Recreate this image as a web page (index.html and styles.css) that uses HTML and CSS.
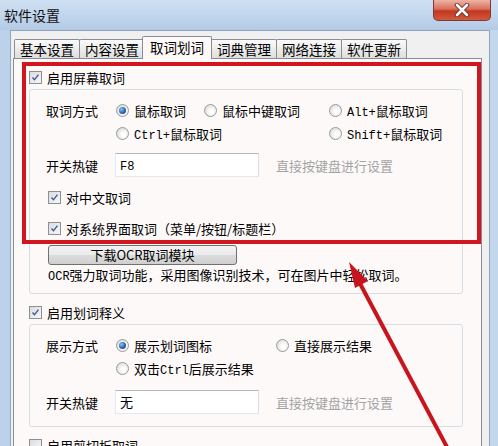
FILE: index.html
```html
<!DOCTYPE html>
<html lang="zh-CN">
<head>
    <meta charset="UTF-8">
    <title>软件设置</title>
    <link rel="stylesheet" href="styles.css">
</head>
<body>
    <div class="window">
        <div class="titlebar">
            <span class="title">软件设置</span>
            <div class="close-btn">
                <svg width="18" height="14" viewBox="0 0 18 14">
                    <path d="M4 2 L14 12 M14 2 L4 12" stroke="#6b3128" stroke-width="4.5" stroke-linecap="round"/>
                    <path d="M4 2 L14 12 M14 2 L4 12" stroke="#ffffff" stroke-width="2.6" stroke-linecap="round"/>
                </svg>
            </div>
        </div>
        <div class="client">
            <div class="tabs">
                <div class="tab">基本设置</div>
                <div class="tab">内容设置</div>
                <div class="tab active">取词划词</div>
                <div class="tab">词典管理</div>
                <div class="tab">网络连接</div>
                <div class="tab">软件更新</div>
            </div>
            <div class="page">
                <div class="check-row">
                    <span class="checkbox"><svg viewBox="0 0 13 13"><path d="M3 6.5 L5.3 9.2 L10 3" stroke="#3f5590" stroke-width="1.6" fill="none"/></svg></span>
                    <span>启用屏幕取词</span>
                </div>
                <div class="group group-grab">
                    <div class="field-row">
                        <span class="field-label">取词方式</span>
                        <div class="options grab-modes">
                            <span class="opt"><i class="radio on"></i><span>鼠标取词</span></span>
                            <span class="opt"><i class="radio"></i><span>鼠标中键取词</span></span>
                            <span class="opt"><i class="radio"></i><span><span class="en">Alt+</span>鼠标取词</span></span>
                            <span class="opt span2"><i class="radio"></i><span><span class="en">Ctrl+</span>鼠标取词</span></span>
                            <span class="opt"><i class="radio"></i><span><span class="en">Shift+</span>鼠标取词</span></span>
                        </div>
                    </div>
                    <div class="hotkey-row">
                        <span class="field-label">开关热键</span>
                        <div class="textbox"><span class="en">F8</span></div>
                        <span class="hint">直接按键盘进行设置</span>
                    </div>
                    <div class="check-row inner first">
                        <span class="checkbox"><svg viewBox="0 0 13 13"><path d="M3 6.5 L5.3 9.2 L10 3" stroke="#3f5590" stroke-width="1.6" fill="none"/></svg></span>
                        <span>对中文取词</span>
                    </div>
                    <div class="check-row inner second">
                        <span class="checkbox"><svg viewBox="0 0 13 13"><path d="M3 6.5 L5.3 9.2 L10 3" stroke="#3f5590" stroke-width="1.6" fill="none"/></svg></span>
                        <span>对系统界面取词（菜单/按钮/标题栏）</span>
                    </div>
                    <div class="btn">下载OCR取词模块</div>
                    <p class="note"><span class="en">OCR</span>强力取词功能，采用图像识别技术，可在图片中轻松取词。</p>
                </div>

                <div class="check-row section">
                    <span class="checkbox"><svg viewBox="0 0 13 13"><path d="M3 6.5 L5.3 9.2 L10 3" stroke="#3f5590" stroke-width="1.6" fill="none"/></svg></span>
                    <span>启用划词释义</span>
                </div>
                <div class="group group-show">
                    <div class="field-row">
                        <span class="field-label">展示方式</span>
                        <div class="options show-modes">
                            <span class="opt"><i class="radio on"></i><span>展示划词图标</span></span>
                            <span class="opt"><i class="radio"></i><span>直接展示结果</span></span>
                            <span class="opt"><i class="radio"></i><span>双击<span class="en">Ctrl</span>后展示结果</span></span>
                        </div>
                    </div>
                    <div class="hotkey-row">
                        <span class="field-label">开关热键</span>
                        <div class="textbox">无</div>
                        <span class="hint">直接按键盘进行设置</span>
                    </div>
                </div>

                <div class="check-row section">
                    <span class="checkbox"></span>
                    <span>启用剪切板取词</span>
                </div>
            </div>
        </div>

        <div class="highlight-box"></div>
        <svg class="arrow" width="498" height="446" viewBox="0 0 498 446">
            <line x1="356" y1="276" x2="456" y2="464" stroke="#c8141c" stroke-width="4"/>
            <polygon points="349,262 355,288 368,281" fill="#c8141c"/>
        </svg>
    </div>
</body>
</html>
```

FILE: styles.css
```css
body {
    margin: 0;
    font-family: "Noto Sans CJK SC", sans-serif;
    font-size: 13px;
    color: #000000;
}

.window {
    position: relative;
    width: 498px;
    height: 446px;
    overflow: hidden;
    display: flex;
    flex-direction: column;
    background: linear-gradient(90deg, #bcd2ea 0%, #cadcf0 50%, #c2d6ec 100%);
}

.titlebar {
    height: 30px;
    display: flex;
    justify-content: space-between;
    align-items: flex-start;
    padding-left: 4px;
    background: linear-gradient(#cfe0f2, #bfd4ec 60%, #b4cae4);
}

.title {
    font-size: 14px;
    line-height: 30px;
    color: #111111;
}

.close-btn {
    width: 56px;
    height: 20px;
    margin-right: 7px;
    border: 1px solid #7d3b32;
    border-top: none;
    border-radius: 0 0 5px 5px;
    background: linear-gradient(#eeb4a6 0%, #d9705a 45%, #c4361f 55%, #cf5a3c 100%);
    display: flex;
    justify-content: center;
    align-items: center;
}

.client {
    flex: 1;
    margin: 0 8px 0 10px;
    padding: 0 7px 0 2px;
    border: 1px solid #91a6bd;
    border-bottom: none;
    background: #f0f0f0;
    display: flex;
    flex-direction: column;
}

.tabs {
    height: 27px;
    display: flex;
    align-items: flex-end;
    padding-left: 1px;
    position: relative;
    z-index: 1;
}

.tab {
    height: 18px;
    padding: 0 5px;
    margin-right: -1px;
    border: 1px solid #898c95;
    border-bottom: none;
    border-radius: 2px 2px 0 0;
    background: linear-gradient(#fbfbfb, #ececec 50%, #dedede);
    font-size: 13.5px;
    line-height: 19px;
}

.tab.active {
    height: 22px;
    margin: 0 -1px -1px -2px;
    padding: 0 7px;
    background: #fdf9f9;
    line-height: 21px;
    position: relative;
}

.page {
    flex: 1;
    border: 1px solid #898c95;
    background: #fdf9f9;
    padding: 8px 18px 0 15px;
}

.check-row {
    height: 20px;
    display: flex;
    align-items: center;
    gap: 5px;
}

.check-row.section {
    margin-top: 8px;
}

.checkbox {
    width: 11px;
    height: 11px;
    border: 1px solid #8e8f8f;
    background: linear-gradient(135deg, #d9dce0, #f7f7f7);
    display: flex;
}

.checkbox svg {
    width: 11px;
    height: 11px;
}

.group {
    margin-top: 2px;
    border: 1px solid #d5dfe5;
    border-radius: 3px;
    padding: 9px 0 8px 16px;
}

.group-show {
    padding-bottom: 12px;
}

.field-row {
    display: flex;
}

.field-label {
    width: 70px;
    flex-shrink: 0;
    line-height: 23px;
}

.options {
    display: grid;
    grid-auto-rows: 23px;
}

.grab-modes {
    grid-template-columns: 88px 125px auto;
}

.grab-modes .span2 {
    grid-column: span 2;
}

.show-modes {
    grid-template-columns: 160px auto;
}

.opt {
    display: flex;
    align-items: center;
    gap: 5px;
    white-space: nowrap;
}

.radio {
    width: 11px;
    height: 11px;
    border: 1px solid #9a9a9a;
    border-radius: 50%;
    background: radial-gradient(circle at 60% 60%, #ffffff 20%, #d6d6d6 90%);
    position: relative;
}

.radio.on::after {
    content: "";
    position: absolute;
    left: 2px;
    top: 2px;
    width: 7px;
    height: 7px;
    border-radius: 50%;
    background: radial-gradient(circle at 35% 35%, #8fc2f0 0%, #2a66b0 55%, #163f7a 100%);
}

.en {
    font-family: "Liberation Mono", monospace;
    font-size: 12px;
}

.hotkey-row {
    display: flex;
    align-items: center;
    margin-top: 8px;
}

.group-show .hotkey-row {
    margin-top: 10px;
}

.field-label + .textbox {
    margin-left: -1px;
}

.textbox {
    width: 138px;
    height: 22px;
    padding-left: 4px;
    border: 1px solid #e3e9ef;
    border-top-color: #b5b8bf;
    border-right-color: #dbdfe6;
    background: #ffffff;
    line-height: 22px;
    margin-right: 17px;
}

.hint {
    color: #a3a3a3;
}

.check-row.inner {
    margin-left: 2px;
}

.check-row.first {
    margin-top: 10px;
}

.check-row.second {
    margin-top: 11px;
}

.btn {
    width: 187px;
    height: 18px;
    margin: 7px 0 0 2px;
    border: 1px solid #707070;
    border-radius: 3px;
    background: linear-gradient(#f2f2f2 0%, #ebebeb 50%, #dddddd 51%, #cfcfcf 100%);
    text-align: center;
    line-height: 18px;
}

.note {
    margin: 2px 0 0 2px;
    line-height: 16px;
}

.highlight-box {
    position: absolute;
    left: 22px;
    top: 62px;
    width: 459px;
    height: 182px;
    box-sizing: border-box;
    border: 4px solid #d0161e;
}

.arrow {
    position: absolute;
    left: 0;
    top: 0;
}
```
